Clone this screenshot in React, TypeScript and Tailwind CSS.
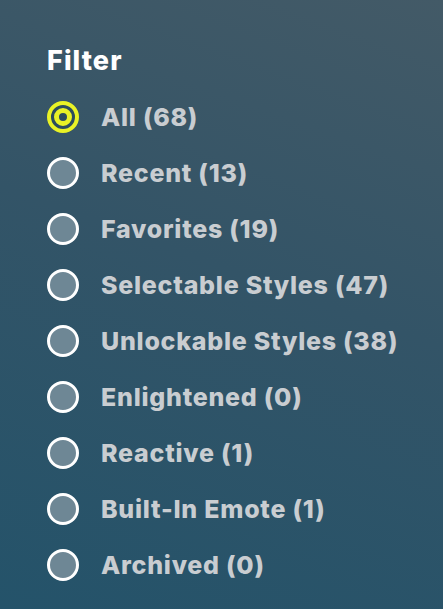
import React from 'react';

interface FilterOption {
  label: string;
  count: number;
}

const options: FilterOption[] = [
  { label: 'All', count: 68 },
  { label: 'Recent', count: 13 },
  { label: 'Favorites', count: 19 },
  { label: 'Selectable Styles', count: 47 },
  { label: 'Unlockable Styles', count: 38 },
  { label: 'Enlightened', count: 0 },
  { label: 'Reactive', count: 1 },
  { label: 'Built-In Emote', count: 1 },
  { label: 'Archived', count: 0 },
];

function Radio({ checked }: { checked: boolean }) {
  if (checked) {
    return (
      <span className="flex h-[32px] w-[32px] items-center justify-center rounded-full border-[4px] border-[#e9f226] bg-[#2c4c5e]">
        <span className="h-[18px] w-[18px] rounded-full border-[5px] border-[#e9f226] bg-[#2c4c5e]" />
      </span>
    );
  }
  return <span className="h-[32px] w-[32px] rounded-full border-[3px] border-white bg-[#6e8795]" />;
}

export default function App() {
  const selected = 'All';

  return (
    <div
      className="h-[609px] w-[443px] overflow-hidden bg-[linear-gradient(200deg,#435a67_0%,#335467_45%,#24536a_100%)] pl-[47px] pt-[45px]"
      style={{ fontFamily: 'Inter, "Noto Sans", sans-serif' }}
    >
      <h2 className="h-[32px] text-[27px] leading-[32px] font-extrabold tracking-[0.04em] text-white">Filter</h2>

      <ul className="mt-[12px]">
        {options.map(opt => (
          <li key={opt.label} className="flex h-[56px] items-center">
            <Radio checked={opt.label === selected} />
            <span className="ml-[22px] text-[25px] leading-[32px] font-extrabold tracking-[0.03em] text-[#c9cdd1]">
              {opt.label} ({opt.count})
            </span>
          </li>
        ))}
      </ul>
    </div>
  );
}
